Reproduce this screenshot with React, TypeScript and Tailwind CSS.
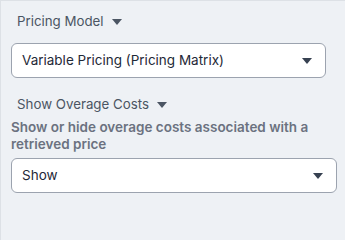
import { useState } from "react"

function Caret({ className = "" }: { className?: string }) {
  return (
    <svg className={className} width="10" height="6" viewBox="0 0 10 6">
      <path d="M0 0h10L5 6z" fill="currentColor" />
    </svg>
  )
}

function SelectBox({ value, width }: { value: string; width: string }) {
  return (
    <button
      className={`flex items-center justify-between h-[35px] ${width} rounded-[6px] border border-[#9ca3af] bg-white pl-[10px] pr-[13px] text-[13.5px] text-[#1f2937]`}
    >
      <span>{value}</span>
      <Caret className="text-[#374151]" />
    </button>
  )
}

export default function App() {
  const [pricing] = useState("Variable Pricing (Pricing Matrix)")
  const [overage] = useState("Show")

  return (
    <div
      className="min-h-screen w-full border-t border-l border-[#dde1e6] bg-[#eef1f5] pl-[10px] pt-[11px]"
      style={{ fontFamily: "Inter, 'Noto Sans', sans-serif" }}
    >
      <div className="flex items-center gap-[8px] pl-[6px] h-[20px] text-[13.3px] text-[#4b5563]">
        <span>Pricing Model</span>
        <Caret className="text-[#4b5563]" />
      </div>
      <div className="mt-[11px]">
        <SelectBox value={pricing} width="w-[315px]" />
      </div>

      <div className="mt-[17px] flex items-center gap-[8px] pl-[6px] h-[20px] text-[13.3px] text-[#4b5563]">
        <span>Show Overage Costs</span>
        <Caret className="text-[#4b5563]" />
      </div>
      <p className="mt-[4px] text-[13.5px] font-semibold leading-[17px] text-[#6b7280]">
        Show or hide overage costs associated with a<br />retrieved price
      </p>
      <div className="mt-[5px]">
        <SelectBox value={overage} width="w-[326px]" />
      </div>
    </div>
  )
}
